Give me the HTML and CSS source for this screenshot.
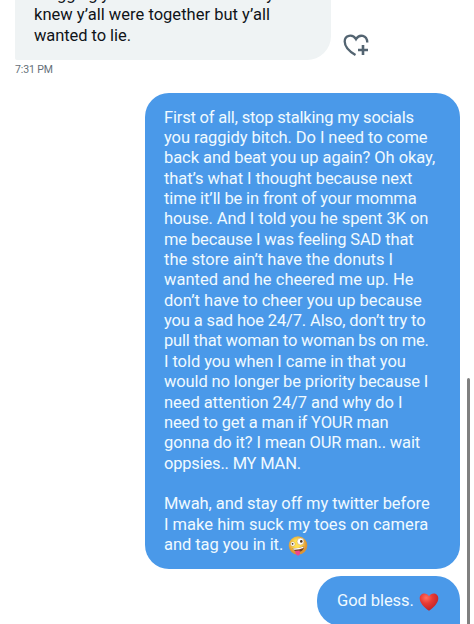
FILE: index.html
```
<!DOCTYPE html>
<html lang="en">
<head>
    <meta charset="UTF-8">
    <meta name="viewport" content="width=device-width, initial-scale=1.0">
    <title>Messages</title>
    <link rel="stylesheet" href="styles.css">
</head>
<body>
    <main class="chat">
        <div class="row received">
            <div class="bubble gray"><span class="snug">bragging you and that is was only</span><br><span class="wide">knew y’all were together but y’all</span><br>wanted to lie.</div>
            <svg class="react" viewBox="0 0 26 23" fill="none" stroke="#536471" stroke-width="2.3">
                <path d="M12.5 21C6.5 17.5 1.7 12.5 1.7 7.5C1.7 1.2 9.5 -.5 13 5.2C16.5 -.5 24 1.2 24.3 8.5"/>
                <path d="M20 11v10M15 16h10" stroke-width="2.6"/>
            </svg>
        </div>
        <div class="time">7:31 PM</div>
        <div class="row sent">
            <div class="bubble blue"><span class="tight">First of all, stop stalking my socials</span><br>you raggidy bitch. Do I need to come<br>back and beat you up again? Oh okay,<br>that’s what I thought because next<br><span class="snug">time it’ll be in front of your momma</span><br>house. And I told you he spent 3K on<br><span class="snug">me because I was feeling SAD that</span><br><span class="wide">the store ain’t have the donuts I</span><br><span class="wide">wanted and he cheered me up. He</span><br><span class="wide">don’t have to cheer you up because</span><br><span class="snug">you a sad hoe 24/7. Also, don’t try to</span><br><span class="tight">pull that woman to woman bs on me.</span><br>I told you when I came in that you<br><span class="snug">would no longer be priority because I</span><br>need attention 24/7 and why do I<br><span class="snug">need to get a man if YOUR man</span><br><span class="snug">gonna do it? I mean OUR man.. wait</span><br><span class="tight">oppsies.. MY MAN.</span><br><br>Mwah, and stay off my twitter before<br><span class="wide">I make him suck my toes on camera</span><br>and tag you in it.<svg class="emoji zany" viewBox="0 0 20 20">
                    <defs>
                        <radialGradient id="face" cx=".45" cy=".4">
                            <stop offset=".4" stop-color="#ffdf52"/>
                            <stop offset="1" stop-color="#dc9435"/>
                        </radialGradient>
                    </defs>
                    <circle cx="10" cy="9.5" r="9.3" fill="url(#face)"/>
                    <circle cx="12.5" cy="5.5" r="3.4" fill="#fff" stroke="#b88b40" stroke-width=".4"/>
                    <circle cx="13.3" cy="5.4" r="1.3" fill="#4b321d"/>
                    <circle cx="4.8" cy="8" r="2.3" fill="#fff" stroke="#b88b40" stroke-width=".4"/>
                    <circle cx="4.6" cy="7.8" r=".9" fill="#4b321d"/>
                    <path d="M4.5 12.6Q11 12.6 16 10.3Q16 14.5 12 15.8Q7 16.6 4.5 12.6" fill="#744322"/>
                    <path d="M5 12.6Q11 12.6 15.8 10.6L15.3 12Q11 14 5.5 13.7z" fill="#fff"/>
                    <path d="M7 15L11.5 14.6Q13 18.5 10.6 19.6Q7.8 20 7 15" fill="#f0448d"/>
                </svg></div>
        </div>
        <div class="row next">
            <div class="bubble blue short">God bless.<svg class="emoji heart" viewBox="0 0 20 19">
                    <defs>
                        <radialGradient id="red" cx=".35" cy=".25" r=".8">
                            <stop offset="0" stop-color="#ff7060"/>
                            <stop offset=".4" stop-color="#e93b35"/>
                            <stop offset="1" stop-color="#b91f27"/>
                        </radialGradient>
                    </defs>
                    <path d="M10 18.3C5 14.5 .7 10.5 .7 5.7C.7 .3 7.5 -.8 10 3.8C12.5 -.8 19.3 .3 19.3 5.7C19.3 10.5 15 14.5 10 18.3z" fill="url(#red)"/>
                </svg></div>
        </div>
        <div class="scrollbar"></div>
    </main>
</body>
</html>
```
FILE: styles.css
```
body {
    margin: 0;
    background: #fff;
    font-family: Roboto, sans-serif;
}
.chat {
    position: relative;
    height: 624px;
    overflow: hidden;
}
.row {
    display: flex;
}
.bubble {
    box-sizing: border-box;
    padding: 14.5px 19px 13px;
    font-size: 16.5px;
    line-height: 20.36px;
    letter-spacing: -0.07px;
    white-space: nowrap;
}
.wide {
    letter-spacing: 0.02px;
}
.snug {
    letter-spacing: -0.13px;
}
.tight {
    letter-spacing: -0.19px;
}
.received {
    margin: -29px 0 0 15px;
    height: 89px;
}
.gray {
    width: 316px;
    padding-top: 13.5px;
    line-height: 20.6px;
    background: #eff3f4;
    border-radius: 24px 24px 24px 2px;
    color: #0f1419;
}
.react {
    width: 26px;
    height: 23px;
    margin: 63px 0 0 12px;
}
.time {
    margin: 3px 15px;
    font-size: 10.5px;
    line-height: 14px;
    letter-spacing: -0.1px;
    color: #657079;
}
.sent {
    justify-content: flex-end;
    margin: 16px 14.5px 0 0;
}
.next {
    justify-content: flex-end;
    margin: 7px 14.5px 0 0;
}
.blue {
    width: 314.5px;
    height: 476px;
    background: #4a99e9;
    border-radius: 24px;
    color: #f0faff;
}
.short {
    width: 142.5px;
    height: 50px;
    padding-left: 20px;
    border-radius: 24px 24px 2px 24px;
}
.emoji {
    width: 20px;
    height: 20px;
    margin: -3px 0 -3px 5px;
    vertical-align: -3px;
}
/* thumb of the page scrollbar, lies over the conversation */
.scrollbar {
    position: absolute;
    top: 378px;
    right: 4px;
    bottom: 0;
    width: 3px;
    background: #808080;
    border-radius: 2px 2px 0 0;
}
```
